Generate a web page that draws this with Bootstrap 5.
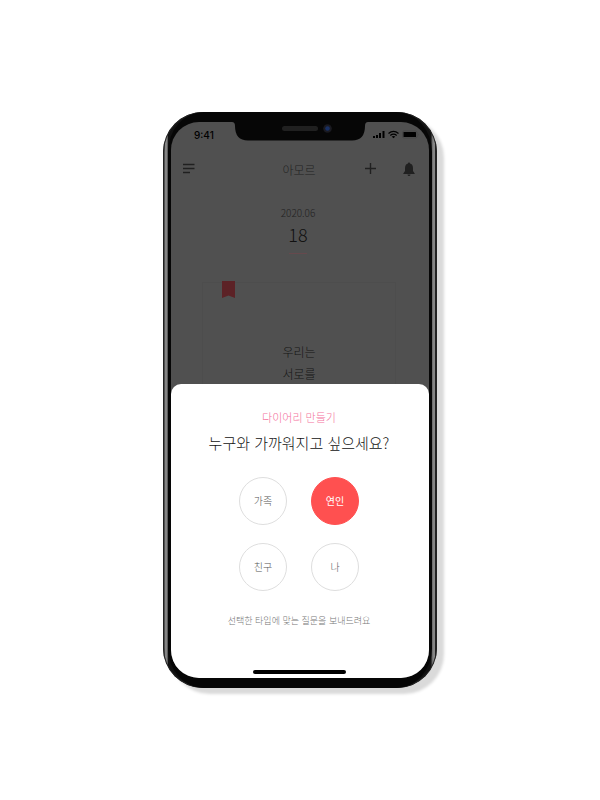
<!DOCTYPE html>
<html lang="ko">
<head>
<meta charset="utf-8">
<meta name="viewport" content="width=device-width, initial-scale=1">
<title>아모르</title>
<link href="https://cdn.jsdelivr.net/npm/bootstrap@5.3.0/dist/css/bootstrap.min.css" rel="stylesheet">
<style>
body{background:#fff;font-family:"Noto Sans CJK KR","Noto Sans",sans-serif;font-weight:300;color:#222}
.phone{flex:0 1 274px;border-radius:40px;padding:0 5px;background:linear-gradient(90deg,#2c2c2c 0 1px,#505050 1px 2px,#858585 2px 4px,#5c5c5c 4px 5px,#111 5px calc(100% - 6px),#5c5c5c calc(100% - 5px),#858585 calc(100% - 4px) calc(100% - 2px),#222 calc(100% - 2px));box-shadow:inset 0 0 0 1px #222,7px 6px 3px #dadada}
.bezel{background:#060606;border-radius:36px/40px;padding:10px 3px}
.screen{min-height:556px;background:#505050;border-radius:28px;overflow:hidden}
.notch{top:-1px;left:0;right:0}
.status{height:26px;padding:0 10px 0 23px;font:500 10px/26px Inter,sans-serif;color:#000}
.appbar{height:42px;padding:0 14px 0 12px;display:grid;grid-template-columns:1fr auto 1fr}
.appbar button,.choice{appearance:none;padding:0;background:none;border:0;color:inherit}
.brand{font-size:12px;line-height:18px;padding-top:2px;color:#222}
.month{font-size:10px;line-height:14px;padding-top:16px}
.day{font-size:18px;line-height:28px;color:#111}
.rule{width:18px;height:1px;background:#66494d;margin-top:5px}
.entry{margin:28px 33px 0 31px;border:1px solid #4d4d4d;border-bottom:0;font-size:12px;line-height:22px;padding-top:58px;color:#151515}
.ribbon{top:-2px;left:19px}
.sheet{background:#fff;border-radius:10px 10px 0 0;margin-top:-1px;padding:23px 2px 4px 0;z-index:1}
.step{font-size:11px;line-height:20px;color:#f4719c}
.question{font-size:15px;line-height:32px;font-weight:300;color:#111}
.choices{display:grid;grid-template-columns:48px 48px;gap:18px 24px;padding-top:18px}
.choice{width:48px;height:48px;padding-bottom:2px;border:1px solid #dedede;border-radius:50%;font-size:10px;font-weight:300;color:#555}
.choice.active{background:#ff5050;border-color:#ff5050;color:#fff;font-weight:400}
.hint{font-size:9px;line-height:16px;color:#777;padding-top:22px}
.home{width:93px;height:4px;background:#000;margin-top:41px}
</style>
<script src="https://cdn.jsdelivr.net/npm/bootstrap@5.3.0/dist/js/bootstrap.bundle.min.js"></script>
</head>
<body class="min-vh-100 d-flex align-items-center justify-content-center">
<main class="phone">
<div class="bezel">
<div class="screen position-relative d-flex flex-column">
  <div class="status d-flex justify-content-between align-items-center">
    <span>9:41</span>
    <svg width="46" height="10" viewBox="0 0 46 10" aria-hidden="true">
      <path d="M0 6h2v2H0zM3 5h2v3H3zM6 3h2v5H6zM9.500 1h2v7h-2z"/>
      <path d="M15.500 3.500Q20.500-.700 25.500 3.500M17.300 5.500Q20.500 2.900 23.700 5.500" fill="none" stroke="#000" stroke-width="1.300"/><path d="M18.700 6.500Q20.500 5.300 22.300 6.500L20.500 8.300z"/>
      <rect x="29.500" y="1" width="14.500" height="7" rx="1.500" fill="none" stroke="#424242" stroke-width=".7"/><rect x="30.500" y="2" width="12.500" height="5" rx=".6"/><path d="M45 3.500V6q1-1.200 0-2.500" fill="#424242"/>
    </svg>
  </div>
  <header class="appbar align-items-center">
    <button class="d-flex" type="button" aria-label="메뉴"><svg width="12" height="12" viewBox="0 0 12 12"><path d="M0 1.500h11.500M0 5.500h11.500M0 9.500h7" fill="none" stroke="#202020" stroke-width="1.300"/></svg></button>
    <span class="brand">아모르</span>
    <div class="d-flex justify-content-end align-items-center">
      <button class="d-flex me-4" type="button" aria-label="추가"><svg width="14" height="12" viewBox="0 0 14 12"><path d="M0 5.500h11M5.500 0v11" fill="none" stroke="#202020" stroke-width="1.400"/></svg></button>
      <button class="d-flex" type="button" aria-label="알림"><svg width="12" height="15" viewBox="0 0 12 15"><path d="M6 .4c.7 0 1 .5 1 1.100C9 2 10 3.700 10 6v3L11.700 11.500v.4H.3v-.4L2 9V6C2 3.700 3 2 5 1.500 5 .9 5.300.4 6 .4zM4.500 12.500h3Q7.300 14 6 14T4.500 12.500z" fill="#202020"/></svg></button>
    </div>
  </header>
  <section class="d-flex flex-column align-items-center pe-1">
    <div class="month">2020.06</div>
    <div class="day">18</div>
    <div class="rule"></div>
  </section>
  <article class="entry position-relative flex-grow-1 text-center">
    <svg class="ribbon position-absolute" width="13" height="17" viewBox="0 0 13 17" aria-hidden="true"><path d="M0 0h13v17l-6.500-2.500L0 17z" fill="#5c2226"/></svg>
    우리는<br>서로를
  </article>
  <section class="sheet d-flex flex-column align-items-center">
    <div class="step">다이어리 만들기</div>
    <h1 class="question m-0">누구와 가까워지고 싶으세요?</h1>
    <div class="choices">
      <button class="choice" type="button">가족</button>
      <button class="choice active" type="button" aria-pressed="true">연인</button>
      <button class="choice" type="button">친구</button>
      <button class="choice" type="button">나</button>
    </div>
    <div class="hint">선택한 타입에 맞는 질문을 보내드려요</div>
    <div class="home rounded-pill"></div>
  </section>
  <div class="notch position-absolute d-flex justify-content-center">
    <svg width="136" height="20" viewBox="0 0 136 20" aria-hidden="true"><path d="M0 0h136v1q-3 0-3 4 0 14.500-13 14.500H16Q3 19.500 3 5q0-4-3-4z" fill="#060606"/><rect x="50" y="5" width="36" height="5" rx="2.500" fill="#202020"/><circle cx="95.500" cy="7.500" r="4.300" fill="#1a1a20"/><circle cx="95.500" cy="7.500" r="2.300" fill="#182f63"/></svg>
  </div>
</div>
</div>
</main>
</body>
</html>
